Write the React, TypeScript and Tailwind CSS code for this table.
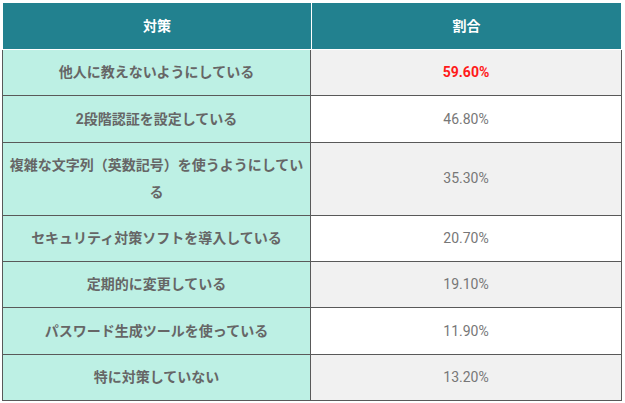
import React from "react";

const rows: { label: string; value: string; highlight?: boolean }[] = [
  { label: "他人に教えないようにしている", value: "59.60%", highlight: true },
  { label: "2段階認証を設定している", value: "46.80%" },
  { label: "複雑な文字列（英数記号）を使うようにしている", value: "35.30%" },
  { label: "セキュリティ対策ソフトを導入している", value: "20.70%" },
  { label: "定期的に変更している", value: "19.10%" },
  { label: "パスワード生成ツールを使っている", value: "11.90%" },
  { label: "特に対策していない", value: "13.20%" },
];

export default function App() {
  return (
    <div
      className="bg-white w-[625px] h-[403px] pl-[2px] pt-[2px]"
      style={{ fontFamily: 'Roboto, "Noto Sans CJK JP", sans-serif' }}
    >
      <div className="w-[620px]">
        <div className="flex gap-px border border-white bg-white">
          <div className="w-[308px] h-[46px] bg-[#22818f] flex items-center justify-center text-white font-bold text-[14px]">
            対策
          </div>
          <div className="flex-1 h-[46px] bg-[#22818f] flex items-center justify-center text-white font-bold text-[14px]">
            割合
          </div>
        </div>
        <div className="border-l border-r border-[#595959]">
          {rows.map((r, i) => (
            <div key={i} className="flex border-b border-[#595959]">
              <div className="w-[308px] shrink-0 bg-[#bdf0e4] border-r border-[#595959] px-[6px] py-[9.33px] leading-[26.67px] text-[14px] font-bold text-[#666666] text-center flex items-center justify-center">
                <span>{r.label}</span>
              </div>
              <div
                className={
                  "flex-1 flex items-center justify-center text-[14px] leading-[26.67px] " +
                  (i % 2 === 0 ? "bg-[#f1f1f1] " : "bg-white ") +
                  (r.highlight ? "text-[#ff1a1a] font-bold" : "text-[#777777]")
                }
              >
                {r.value}
              </div>
            </div>
          ))}
        </div>
      </div>
    </div>
  );
}
